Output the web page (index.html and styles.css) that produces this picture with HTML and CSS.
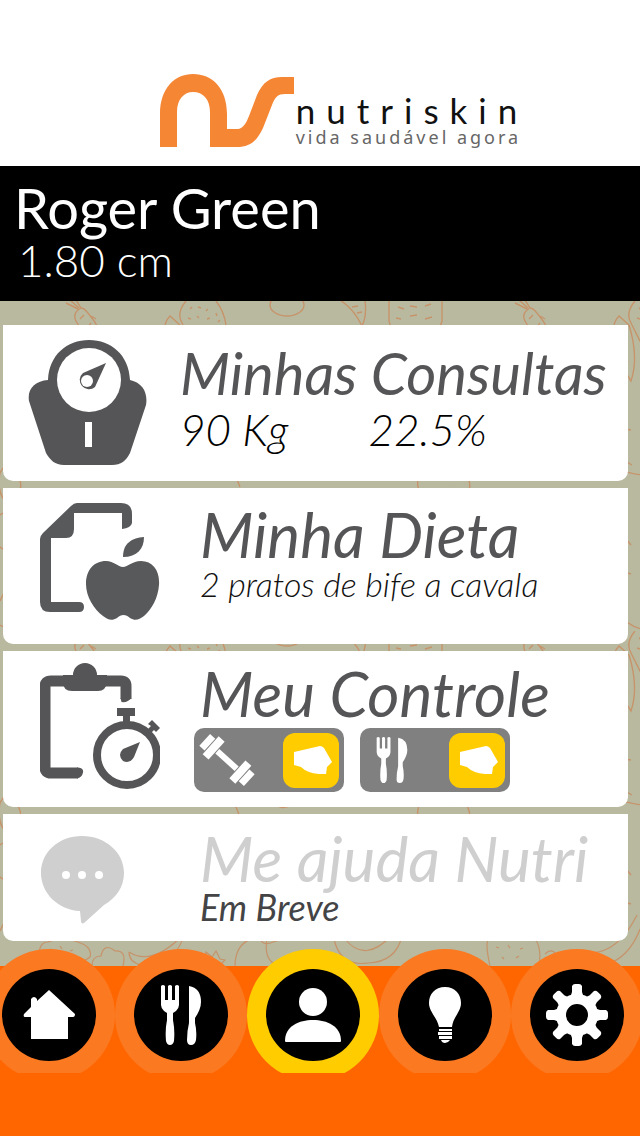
FILE: index.html
```html
<!DOCTYPE html>
<html lang="pt-BR">
<head>
<meta charset="utf-8">
<meta name="viewport" content="width=device-width, initial-scale=1">
<title>Nutriskin</title>
<link rel="stylesheet" href="styles.css">
</head>
<body>
<div class="app">
  <header class="brand">
    <svg class="brand-mark" width="134" height="74" viewBox="0 0 134 74" aria-hidden="true">
      <path d="M0 73V40C0 14 15 0 33 0C52 0 67 14 67 40V55H78C82 55 86 50 89 42L97 21C103 8 110 3 122 3H134V20H125C118 20 115 23 112 31L103 54C97 67 90 73 77 73H50V38C50 25 43 18 33 18C24 18 17 25 17 38V73Z" fill="#f58634"/>
    </svg>
    <div class="brand-text">
      <span class="brand-name">nutriskin</span>
      <span class="brand-tag">vida saudável agora</span>
    </div>
  </header>

  <section class="profile">
    <h1 class="profile-name">Roger Green</h1>
    <p class="profile-height">1.80 cm</p>
  </section>

  <main class="content">
    <svg class="doodles" aria-hidden="true">
      <defs>
        <pattern id="food" width="449" height="330" patternUnits="userSpaceOnUse">
          <g fill="none" stroke="#c98a5c" stroke-width="1.4" opacity=".8">
            <path d="M66 2l12 6M70-1l9 8M76-1l5 8M81 7q-9 5-5 13q6 12 30 30q-4-22-18-38q-4-5-7-5M84 14l-4 4M91 22l-3 4M96 18l-5-3"/>
            <path d="M186 0q-10 12-4 22l10 20h28l6-18q-2-14-10-24M190 8l2-2M198 6l3 1M206 10l2-2M188 17l3 1M197 15l2 2M207 18l3-1M216 12l1 3M218 21l2-2"/>
            <ellipse cx="287" cy="4" rx="17" ry="11"/>
            <path d="M340-1q14 9 22 26q5-10 3-26M352 6l6-1M357 12l5-1"/>
            <path d="M389 0v20q2 14 26 14t27-14V0M398 6l6 2M410 5l7 1M425 5l6-2M396 17l5 1M410 15l7-1M425 18l7-2"/>
            <path d="M180 24l-10-9q-12 12 0 45l12 20q8-24-2-56M174 34l1 2M175 46l2 2M178 59l1 2"/>
            <path d="M0 172q8-16 16 0q12 16-6 32q-14-8-10-32M178 100q-12-14-20 0t10 27l14 2M175 144q-14 8 8 20"/>
            <path d="M38 164q18 20 54 3q-20-18-54-3M146 170c22-10 38 12 64 0M270 166q9 18 26 5q12-9 28 4M240 186l-12-30-18-15"/>
            <path d="M0 300q16-36 31-1c6 18-13 37-31 25M134 329q12-38 38-13t50 0M182 244q-14-19-20-2v25l20 6"/>
            <circle cx="12" cy="230" r="20"/><path d="M420 172q-8 18 10 27l15-8M390 321c4-18 14-28 30-11"/>
          </g>
        </pattern>
      </defs>
      <rect width="100%" height="639" fill="url(#food)"/>
      <path fill="none" stroke="#c98a5c" stroke-width="1.2" opacity=".8" d="M40 665q-4-24 8-24q15-6 30 0q15 5 12 15l-14 9M50 648l3 1M60 645l2 3M70 650l3-1M54 657l2 2M66 657l3-2M92 665q0-10 9-10q3-14 14-5q12-1 8 15M129 651q23 15 55-18q-6 29-43 31q-12-3-12-13M204 665l2-14 6 5 4-6 4 8 5 1-6 6M235 665c0-25 20-35 43-25M258 632q3 15 15 9q14-4 20-9M268 632q-7 30 13 33M334 638q6 28 34 24q28-1 34-27M345 638q20 25 47-4M490 665q-6-27 0-27h45q7 9 4 27M496 646l3 1M508 644l2 3M520 648l3-1M502 656l2 2M516 657l3-2M545 653q10-10 16 12M590 652c24 0 38-20 47-38M602 665c20-5 31-18 38-37"/>
    </svg>

    <article class="card">
      <svg class="card-icon icon-scale" width="120" height="128" viewBox="0 0 120 128" aria-hidden="true">
        <path d="M20 41C21 16 39 1 61 1s40 15 41 40c13 3 18 13 16 25l-16 48c-4 8-9 12-18 12H36c-9 0-14-5-18-12L1 62C-1 50 7 42 20 41Z" fill="#555557"/>
        <circle cx="61" cy="41" r="32" fill="#fff"/>
        <path d="M78 24L55 34a9 9 0 1 0 12 14Z" fill="#555557"/>
        <circle cx="59" cy="42" r="6" fill="#fff"/>
        <path d="M57 83h7v25h-7z" fill="#fff"/>
      </svg>
      <div class="card-body card-body-wide">
        <h2 class="card-title"><a href="#consultas">Minhas Consultas</a></h2>
        <p class="metrics"><span class="metric">90 Kg</span><span class="metric">22.5%</span></p>
      </div>
    </article>

    <article class="card">
      <svg class="card-icon" width="120" height="118" viewBox="0 0 120 118" aria-hidden="true">
        <path d="M44 1H81q11 0 11 11v9q-1 5-10 6V11H34v16q0 9-8 9H11v64h28q5 0 5 5t-5 5H10Q0 110 0 100V37Q0 34 3 31L31 4q3-3 6-3Z" fill="#58595b"/>
        <path d="M83 65c5 0 9-6 18-6c12 0 19 10 18 24c-1 13-7 24-15 31c-5 4-9 5-14 2c-4-4-9-4-13 0c-5 3-9 2-14-2c-9-7-17-19-17-32c0-14 8-23 20-23c8 0 12 6 17 6Z" fill="#58595b"/>
        <path d="M83 55C83 41 92 36 104 35c0 12-7 20-21 20Z" fill="#58595b"/>
      </svg>
      <div class="card-body">
        <h2 class="card-title"><a href="#dieta">Minha Dieta</a></h2>
        <p class="card-note">2 pratos de bife a cavala</p>
      </div>
    </article>

    <article class="card card-control">
      <svg class="card-icon" width="120" height="128" viewBox="1 0 120 128" aria-hidden="true">
        <path d="M46 20H12Q6 20 6 26v80q0 6 6 6H39M62 20H82q5 0 5 5V38" fill="none" stroke="#555557" stroke-width="11"/>
        <path d="M38 106.500q7 0 6 5t-6 6zM81.500 37h11q-4 5-10 4z" fill="#555557"/>
        <path d="M34 14a12 12 0 0 1 24 0h10v7q-1 9-9 9H33q-9 0-9-9v-7Z" fill="#555557"/>
        <circle cx="88" cy="94" r="30" fill="none" stroke="#555557" stroke-width="8"/>
        <path d="M78 47h18v8h-5v9h-7v-9h-6zM108 69l4-4-3-2 4-4 8 8-4 4-2-2-4 4zM101 81l-6 15q-4 7-11 4q-6-6 0-12z" fill="#555557"/>
      </svg>
      <div class="card-body">
        <h2 class="card-title"><a href="#controle">Meu Controle</a></h2>
        <div class="toggles">
          <label class="toggle">
            <input type="checkbox" checked aria-label="Exercício">
            <svg class="toggle-icon" width="52" height="52" viewBox="0 0 52 52" aria-hidden="true">
              <g transform="translate(25 26) rotate(42)" fill="#fff"><path d="M-30-8h7V8h-7zM-22-12h8v24h-8zM-13-3h26v6h-26zM14-12h8v24h-8zM23-8h7V8h-7z"/></g>
            </svg>
            <svg class="toggle-knob" width="56" height="55" viewBox="0 0 56 55" aria-hidden="true"><path d="M11 19L37 13q2 0 4 2l8 14-5 5-1 7H36q-12-1-18-7l-7-2Z" fill="#fff"/></svg>
          </label>
          <label class="toggle">
            <input type="checkbox" checked aria-label="Alimentação">
            <svg class="toggle-icon icon-cutlery" width="32" height="46" viewBox="0 0 40 60" aria-hidden="true"><use href="#cutlery"/></svg>
            <svg class="toggle-knob" width="56" height="55" viewBox="0 0 56 55" aria-hidden="true"><path d="M11 19L37 13q2 0 4 2l8 14-5 5-1 7H36q-12-1-18-7l-7-2Z" fill="#fff"/></svg>
          </label>
        </div>
      </div>
    </article>

    <article class="card card-soon">
      <svg class="card-icon" width="120" height="90" viewBox="0 0 120 90" aria-hidden="true">
        <path d="M42 1C65 1 84 17 84 38c0 14-8 25-20 32L44 88c-2 1-3 0-3-2l-1-10C18 75 1 58 1 38C1 17 19 1 42 1Z" fill="#cfcfcf"/>
        <g fill="#fff"><circle cx="26" cy="40" r="4"/><circle cx="42" cy="40" r="4"/><circle cx="59" cy="40" r="4"/></g>
      </svg>
      <div class="card-body">
        <h2 class="card-title">Me ajuda Nutri</h2>
        <p class="card-note">Em Breve</p>
      </div>
    </article>
  </main>

  <nav class="tabs" aria-label="Principal">
    <a class="tab" href="#inicio" aria-label="Início"><span class="tab-disc">
      <svg width="52" height="50" viewBox="0 0 52 50"><path d="M26 0L52 24q0 3-2 3h-5v22H8V27H2q-2 0-1-3l7-7V9q3-4 6 0v2Z" fill="#fff"/></svg>
    </span></a>
    <a class="tab" href="#dieta" aria-label="Dieta"><span class="tab-disc">
      <svg width="40" height="60" viewBox="0 0 40 60"><g id="cutlery" fill="#fff">
        <path d="M0 1Q2-1 4 1V15H7V1Q9-1 11 1V15H14V1Q16-1 18 1V20Q18 23 15 26L12 28V35Q14 45 13 56Q12 60 9 60Q6 60 5 56Q4 45 6 35V28L3 26Q0 23 0 20Z"/>
        <path d="M28 1Q40 3 40 17Q40 24 34 33V38Q36 46 35 55Q34 60 30 60Q26 60 26 55Q26 46 28 38Z"/>
      </g></svg>
    </span></a>
    <a class="tab tab-active" href="#perfil" aria-label="Perfil" aria-current="page"><span class="tab-disc">
      <svg width="58" height="54" viewBox="0 0 58 54"><circle cx="29" cy="14" r="14" fill="#fff"/><path d="M1 53C1 38 15 32 29 32s28 6 28 21Q57 54 56 54H2Q1 54 1 53Z" fill="#fff"/></svg>
    </span></a>
    <a class="tab" href="#dicas" aria-label="Dicas"><span class="tab-disc">
      <svg width="34" height="56" viewBox="0 0 34 56"><path d="M17 0C27 0 33 7 33 16c0 9-8 14-9 24H11C9 30 1 25 1 16C1 7 7 0 17 0ZM11 42h13v2H11zM10 45h14v3H10zM11 49h13v3H11zM13 53h9q-2 3-5 3t-4-3Z" fill="#fff"/></svg>
    </span></a>
    <a class="tab" href="#ajustes" aria-label="Ajustes"><span class="tab-disc">
      <svg width="64" height="64" viewBox="-32 -32 64 64"><g fill="#fff">
        <g id="teeth"><path id="tooth" d="M-7-17L-5-23V-29Q-4-31-2-31H2Q4-31 5-29V-23L7-17Z"/><use href="#tooth" transform="rotate(90)"/><use href="#tooth" transform="rotate(180)"/><use href="#tooth" transform="rotate(270)"/></g>
        <use href="#teeth" transform="rotate(45)"/></g>
        <circle r="16" fill="none" stroke="#fff" stroke-width="10"/>
      </svg>
    </span></a>
  </nav>
</div>
</body>
</html>
```
FILE: styles.css
```css
* { box-sizing: border-box; }

body {
  margin: 0;
  background: #ff6600;
  font-family: Lato, "Open Sans", sans-serif;
}

h1, h2, p { margin: 0; font-weight: 400; }
a { color: inherit; text-decoration: none; }

.app {
  display: flex;
  flex-direction: column;
  min-height: 100vh;
  overflow: hidden;
}

.brand {
  display: flex;
  justify-content: center;
  gap: 2px;
  padding: 74px 0 18px 48px;
  background: #fff;
}

.brand-text {
  display: flex;
  flex-direction: column;
  padding-top: 19px;
  white-space: nowrap;
}

.brand-name {
  color: #111;
  font-size: 35px;
  line-height: 34px;
  letter-spacing: 11px;
}

.brand-tag {
  color: #666;
  font-family: "Noto Sans", sans-serif;
  font-size: 18px;
  line-height: 20px;
  letter-spacing: 3px;
}

.profile {
  padding: 14px 14px 16px;
  background: #000;
  color: #fff;
}

.profile-name { font-size: 56px; line-height: 56px; }
.profile-height { padding-left: 4px; font-size: 44px; font-weight: 300; line-height: 49px; }

.content {
  position: relative;
  display: flex;
  flex-direction: column;
  gap: 7px;
  padding: 24px 12px 25px 3px;
  background: #b9b99f;
}

.doodles {
  position: absolute;
  inset: 0;
  width: 100%;
  height: 100%;
}

.card {
  position: relative;
  display: flex;
  align-items: flex-start;
  gap: 40px;
  min-height: 156px;
  padding: 14px 16px 14px 37px;
  border-radius: 0 0 10px 10px;
  background: #fff;
}

.card-icon { flex: none; }
.icon-scale { margin-left: -12px; }

.card-body { flex: 1; min-width: 0; white-space: nowrap; }
.card-body-wide { margin-left: -8px; }

.card-title {
  color: #555557;
  font-size: 62px;
  font-style: italic;
  line-height: 64px;
}

.card-body-wide .card-title { padding-top: 2px; font-size: 58px; }

.card-note {
  color: #111;
  font-size: 34px;
  font-style: italic;
  font-weight: 300;
  line-height: 36px;
}

.metrics {
  display: flex;
  gap: 80px;
  color: #000;
  font-size: 44px;
  font-style: italic;
  font-weight: 300;
  line-height: 48px;
}

.card-control { padding-top: 10px; }

.toggles { display: flex; gap: 16px; margin: 3px 0 0 -6px; }

.toggle {
  position: relative;
  display: flex;
  align-items: center;
  justify-content: space-between;
  width: 150px;
  height: 64px;
  padding: 0 5px 0 8px;
}

.toggle input {
  position: absolute;
  inset: 0;
  appearance: none;
  margin: 0;
  border-radius: 10px;
  background: #808080;
}

.toggle-icon, .toggle-knob { position: relative; }
.toggle-icon { overflow: visible; }
.icon-cutlery { margin-left: 8px; }
.toggle-knob { border-radius: 12px; background: #ffcc00; }

.card-soon { min-height: 127px; padding-top: 21px; }
.card-soon .card-title { color: #cfcfcf; line-height: 46px; }
.card-soon .card-note { margin-top: 8px; color: #444446; font-size: 36px; font-weight: 400; }

.tabs {
  position: relative;
  display: grid;
  grid-template-columns: repeat(5, 1fr);
  height: 124px;
  margin: -17px -3px 0 -17px;
  overflow: hidden;
}

.tab {
  display: flex;
  align-items: center;
  justify-content: center;
  justify-self: center;
  width: 132px;
  height: 132px;
  border-radius: 50%;
  background: #fb7921;
}

.tab-active { background: #ffcc00; }

.tab-disc {
  display: flex;
  align-items: center;
  justify-content: center;
  width: 94px;
  height: 92px;
  border-radius: 50%;
  background: #000;
}
```
